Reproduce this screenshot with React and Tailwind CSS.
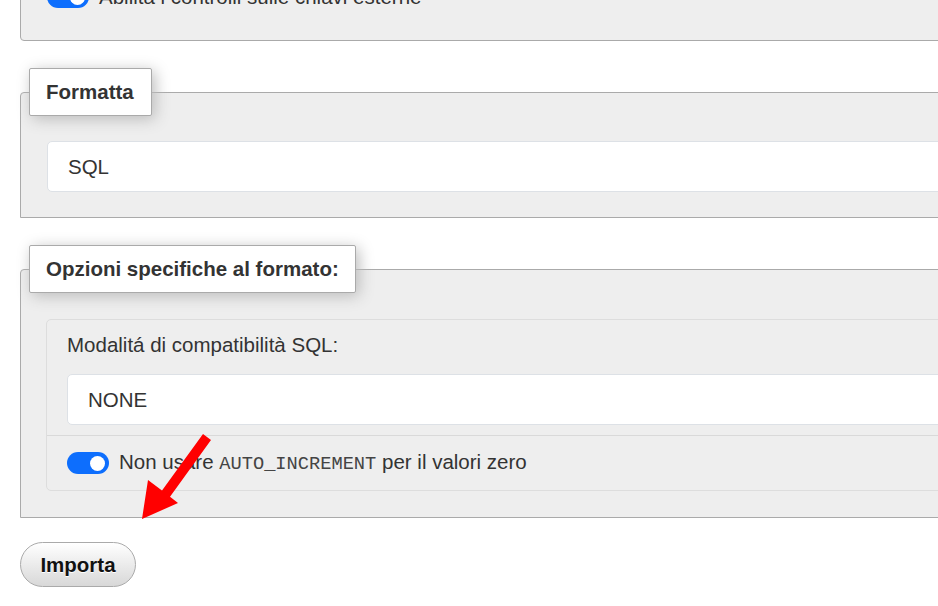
import React from "react";

function Toggle() {
  return (
    <span className="relative inline-flex h-[22px] w-[42px] shrink-0 items-center rounded-full bg-[#0d6efd]">
      <span className="absolute right-[4px] h-[15px] w-[15px] rounded-full bg-white" />
    </span>
  );
}

function Legend({ children, width }) {
  return (
    <div className="relative z-10 ml-[9px] mb-[-24px] flex">
      <div
        className={`h-[48px] ${width} flex items-center rounded-[2px] border border-[#aaa] bg-white pl-[16px] font-bold text-[#333] shadow-[3px_3px_15px_#bbb]`}
      >
        {children}
      </div>
    </div>
  );
}

export default function App() {
  return (
    <div
      className="relative h-[606px] w-[938px] overflow-hidden bg-white text-[20.5px] leading-[28px] text-[#333]"
      style={{ fontFamily: '"Liberation Sans", Arial, sans-serif' }}
    >
      <div className="w-[1100px]">
        {/* Top fieldset, cut off */}
        <div className="-mt-[40px] ml-[20px] h-[81px] rounded-b-[4px] border border-[#aaa] bg-[#eee] pl-[26px] pt-[22px]">
          <div className="flex items-center gap-[10px]">
            <Toggle />
            <span>Abilita i controlli sulle chiavi esterne</span>
          </div>
        </div>

        {/* Formatta */}
        <div className="ml-[20px] mt-[27px]">
          <Legend width="w-[123px]">Formatta</Legend>
          <div className="rounded-t-[4px] border border-[#aaa] bg-[#eee] pb-[25px] pl-[26px] pt-[48px]">
            <div className="flex h-[51px] items-center rounded-[5px] border border-[#dde1e6] bg-white pl-[20px]">
              SQL
            </div>
          </div>
        </div>

        {/* Opzioni specifiche */}
        <div className="ml-[20px] mt-[27px]">
          <Legend width="w-[327px]">Opzioni specifiche al formato:</Legend>
          <div className="rounded-t-[4px] border border-[#aaa] bg-[#eee] pb-[26px] pl-[25px] pt-[49px]">
            <div className="rounded-[5px] border border-[#ddd] bg-[#eee]">
              <div className="pb-[10px] pl-[20px] pt-[11px]">
                <div>Modalitá di compatibilità SQL:</div>
                <div className="mt-[15px] flex h-[51px] items-center rounded-[5px] border border-[#dde1e6] bg-white pl-[20px]">
                  NONE
                </div>
              </div>
              <div className="flex items-center gap-[10px] border-t border-[#d9d9d9] py-[12px] pl-[20px]">
                <Toggle />
                <span>
                  Non usare{" "}
                  <code
                    className="text-[18.7px] text-[#444]"
                    style={{ fontFamily: '"Liberation Mono", "DejaVu Sans Mono", monospace' }}
                  >
                    AUTO_INCREMENT
                  </code>{" "}
                  per il valori zero
                </span>
              </div>
            </div>
          </div>
        </div>

        {/* Button */}
        <div className="ml-[20px] mt-[24px]">
          <button className="h-[45px] w-[116px] rounded-full border border-[#aaa] bg-gradient-to-b from-white to-[#d8d8d8] font-bold text-[#111] [text-shadow:0_1px_0_#fff]">
            Importa
          </button>
        </div>
      </div>

      {/* Red arrow annotation */}
      <svg className="pointer-events-none absolute left-0 top-0" width="938" height="606">
        <polygon
          points="203,434 211,440 170,496.7 178,503 142,519 148,480 162,490.4"
          fill="#ff0000"
        />
      </svg>
    </div>
  );
}
